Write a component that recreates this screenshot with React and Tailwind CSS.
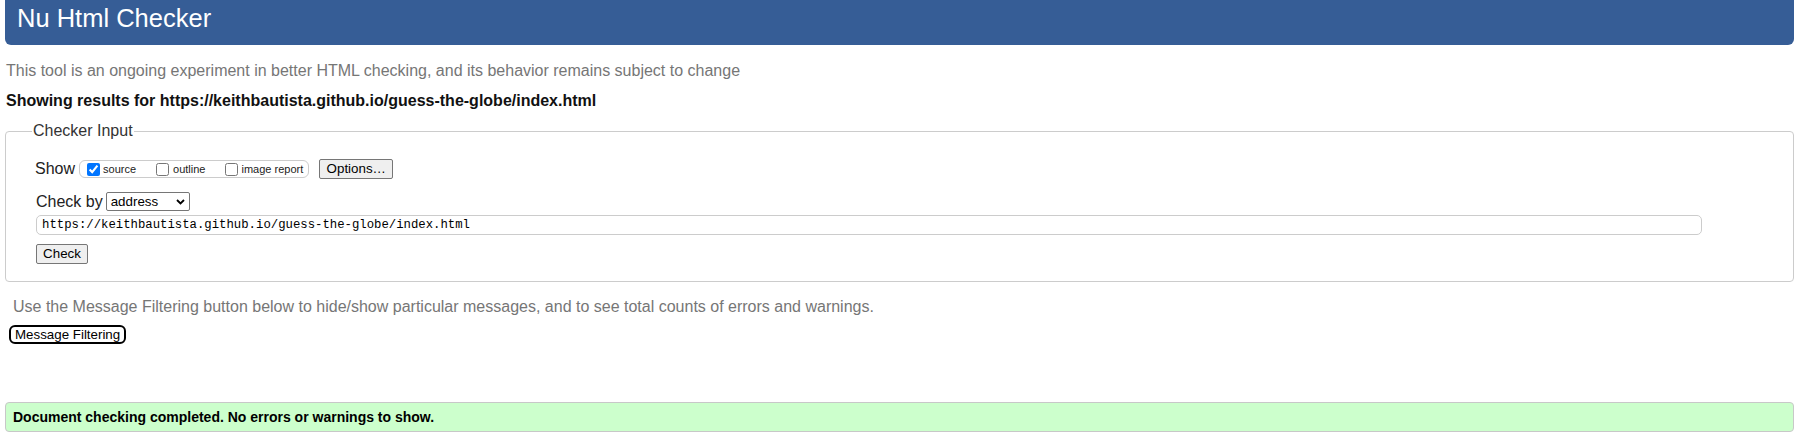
export default function App() {
  return (
    <div className="min-h-screen bg-white pl-[5px] pr-[9px] font-['Liberation_Sans',Arial,sans-serif] text-black">
      <header className="h-[45px] rounded-b-[6px] bg-[#365d96] pl-[12px] pt-[4px]">
        <h1 className="text-[25.5px] leading-[28px] text-white">Nu Html Checker</h1>
      </header>

      <p className="mt-[16px] ml-[1px] text-[16px] leading-[20px] text-[#767676]">
        This tool is an ongoing experiment in better HTML checking, and its behavior remains subject to change
      </p>
      <p className="mt-[10px] ml-[1px] text-[16px] leading-[20px] font-bold text-[#111]">
        Showing results for https://keithbautista.github.io/guess-the-globe/index.html
      </p>

      <fieldset className="mt-[11px] rounded-[4px] border border-[#cccccc] pl-[30px] pb-[17px]">
        <legend className="-ml-[4px] px-[1px] text-[16px] leading-[18px] text-[#333]">Checker Input</legend>

        <div className="mt-[19px] flex h-[20px] items-center">
          <span className="-ml-[1px] text-[16px] leading-[20px] text-[#222]">Show</span>
          <div className="ml-[4px] flex h-[18px] items-center rounded-[6px] border border-[#cccccc] pl-[7px] pr-[5px] text-[11px] text-[#222]">
            <label className="flex items-center">
              <input type="checkbox" defaultChecked className="m-0 h-[13px] w-[13px]" />
              <span className="ml-[3px]">source</span>
            </label>
            <label className="ml-[20px] flex items-center">
              <input type="checkbox" className="m-0 h-[13px] w-[13px]" />
              <span className="ml-[4px]">outline</span>
            </label>
            <label className="ml-[20px] flex items-center">
              <input type="checkbox" className="m-0 h-[13px] w-[13px]" />
              <span className="ml-[3px]">image report</span>
            </label>
          </div>
          <button className="ml-[10px] h-[20px] w-[74px] rounded-[2px] border border-[#767676] bg-[#efefef] text-[13.33px] leading-none text-black">
            Options…
          </button>
        </div>

        <div className="mt-[13px] flex h-[19px] items-center">
          <span className="text-[16px] leading-[20px] text-[#222]">Check by</span>
          <div className="ml-[3px] flex h-[19px] w-[84px] items-center justify-between rounded-[2px] border border-[#767676] bg-white pl-[4px] pr-[3px] text-[13.33px] leading-none">
            <span>address</span>
            <svg width="9" height="6" viewBox="0 0 9 6" className="mr-[1px]">
              <polyline points="1,1 4.5,4.5 8,1" fill="none" stroke="#000" strokeWidth="1.8" />
            </svg>
          </div>
        </div>

        <div className="mt-[4px] flex h-[20px] w-[1666px] items-center rounded-[5px] border border-[#cccccc] pl-[5px] font-['Liberation_Mono',monospace] text-[12.3px] text-black">
          https://keithbautista.github.io/guess-the-globe/index.html
        </div>

        <button className="mt-[9px] block h-[20px] w-[52px] rounded-[2px] border border-[#767676] bg-[#efefef] text-[13.33px] leading-none text-black">
          Check
        </button>
      </fieldset>

      <p className="mt-[15px] ml-[8px] text-[16px] leading-[20px] text-[#767676]">
        Use the Message Filtering button below to hide/show particular messages, and to see total counts of errors and warnings.
      </p>
      <button className="mt-[8px] ml-[4px] block h-[19px] rounded-[6px] border-2 border-black bg-white px-[4px] text-[13.33px] leading-none text-black">
        Message Filtering
      </button>

      <div className="mt-[58px] flex h-[30px] items-center rounded-[4px] border border-[#c8c8c8] bg-[#ccffcc] pl-[7px] text-[14px] font-bold text-black">
        Document checking completed. No errors or warnings to show.
      </div>
    </div>
  );
}
